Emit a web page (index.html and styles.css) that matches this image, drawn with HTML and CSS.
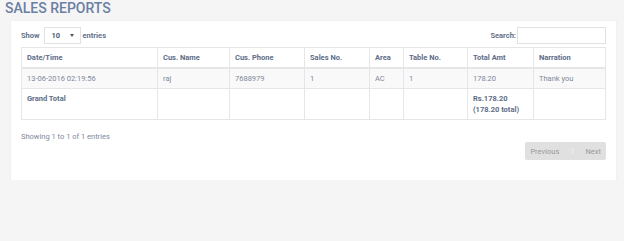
FILE: index.html
```html
<!DOCTYPE html>
<html lang="en">
<head>
    <meta charset="UTF-8">
    <meta name="viewport" content="width=device-width, initial-scale=1.0">
    <title>Sales Reports</title>
    <link rel="stylesheet" href="styles.css">
</head>
<body>

    <h2 class="page-title">Sales Reports</h2>

    <div class="panel">
        <div class="toolbar">
            <label class="length">Show
                <span class="select-wrap">
                    <select>
                        <option>10</option>
                        <option>25</option>
                        <option>50</option>
                        <option>100</option>
                    </select>
                </span>
                entries</label>
            <label class="search">Search:<input type="text"></label>
        </div>

        <table class="report">
            <thead>
                <tr>
                    <th class="c-date">Date/Time</th>
                    <th class="c-name">Cus. Name</th>
                    <th class="c-phone">Cus. Phone</th>
                    <th class="c-sales">Sales No.</th>
                    <th class="c-area">Area</th>
                    <th class="c-table">Table No.</th>
                    <th class="c-total">Total Amt</th>
                    <th>Narration</th>
                </tr>
            </thead>
            <tbody>
                <tr class="odd">
                    <td>13-06-2016 02:19:56</td>
                    <td>raj</td>
                    <td>7688979</td>
                    <td>1</td>
                    <td>AC</td>
                    <td>1</td>
                    <td>178.20</td>
                    <td>Thank you</td>
                </tr>
                <tr class="grand">
                    <td><b>Grand Total</b></td>
                    <td></td>
                    <td></td>
                    <td></td>
                    <td></td>
                    <td></td>
                    <td><b>Rs.178.20<br>(178.20 total)</b></td>
                    <td></td>
                </tr>
            </tbody>
        </table>

        <div class="info">Showing 1 to 1 of 1 entries</div>

        <div class="paging">
            <div class="pages">
                <a class="page-btn">Previous</a>
                <a class="page-btn current">1</a>
                <a class="page-btn">Next</a>
            </div>
        </div>
    </div>

</body>
</html>
```

FILE: styles.css
```css
body {
    font-family: Roboto, "Liberation Sans", sans-serif;
    background-color: #f5f5f5;
    color: #7d889c;
    margin: 0;
    font-size: 7.5px;
}
.page-title {
    margin: 0 0 5px 0;
    padding-left: 5px;
    font-size: 14px;
    line-height: 16px;
    font-weight: 500;
    text-transform: uppercase;
    color: #6b7fa3;
}
.panel {
    margin-left: 11px;
    width: 585px;
    padding: 6px 10px 20px 10px;
    background: white;
    box-shadow: 0 0 2px #e8e8e8;
}
.toolbar {
    display: flex;
    justify-content: space-between;
    align-items: center;
    height: 17px;
    margin-bottom: 3px;
}
.toolbar label {
    display: flex;
    align-items: center;
    font-weight: bold;
    color: #66728a;
}
.select-wrap {
    position: relative;
    display: inline-block;
    margin: 0 2px 0 4px;
}
.select-wrap select {
    appearance: none;
    -webkit-appearance: none;
    width: 37px;
    height: 17px;
    border: 1px solid #e2e2e2;
    background: white;
    font-family: inherit;
    font-size: 7.5px;
    font-weight: bold;
    color: #4e5d75;
    padding: 0 0 0 7px;
    margin: 0;
    border-radius: 0;
}
.select-wrap::after {
    content: "";
    position: absolute;
    right: 7px;
    top: 7px;
    border-left: 2px solid transparent;
    border-right: 2px solid transparent;
    border-top: 3px solid #555;
}
.search input {
    width: 89px;
    height: 17px;
    box-sizing: border-box;
    border: 1px solid #e2e2e2;
    margin: 0 0 0 1px;
    padding: 0 4px;
}
.report {
    width: 585px;
    border-collapse: collapse;
    table-layout: fixed;
    border: 1px solid #e6e6e6;
}
.report th,
.report td {
    border: 1px solid #e6e6e6;
    padding: 4px 5px;
    line-height: 11px;
    text-align: left;
    vertical-align: top;
}
.report th {
    font-weight: bold;
    color: #5d6d88;
    border-bottom-width: 2px;
}
.report b {
    color: #5d6d88;
}
.c-date { width: 125px; }
.c-name { width: 61px; }
.c-phone { width: 64px; }
.c-sales { width: 54px; }
.c-area { width: 23px; }
.c-table { width: 53px; }
.c-total { width: 55px; }
.report tr.odd td {
    background: #f9f9f9;
}
.info {
    margin-top: 11px;
    line-height: 11px;
}
.paging {
    display: flex;
    justify-content: flex-end;
    margin-top: 0;
}
.pages {
    display: flex;
    align-items: center;
    height: 18px;
    background: #e0e0e0;
    border-radius: 2px;
    padding: 0 5px;
}
.page-btn {
    color: #9a9a9a;
    font-size: 7.5px;
}
.page-btn.current {
    color: #f4f4f4;
    margin: 0 11px;
}
```
